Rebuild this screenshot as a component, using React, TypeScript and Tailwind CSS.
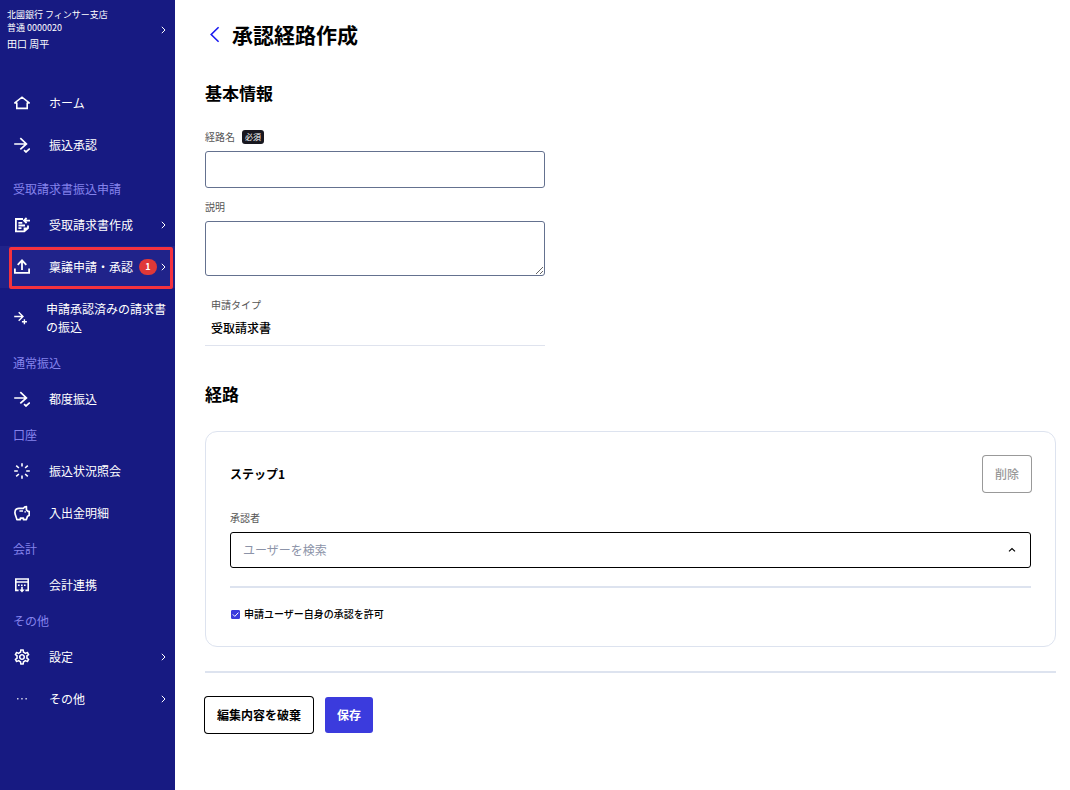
import { useState } from "react";
import type { ReactNode } from "react";
import { MdOutlineSettings } from "react-icons/md";

type NavItemProps = {
  icon: ReactNode;
  label: string;
  active?: boolean;
  badge?: number;
  arrow?: boolean;
  nested?: boolean;
};

type IconProps = {
  children: ReactNode;
  width?: number;
};

function Icon({ children, width = 1.5 }: IconProps) {
  return (
    <svg
      className="size-4"
      viewBox="0 0 16 16"
      fill="none"
      stroke="currentColor"
      strokeWidth={width}
      aria-hidden="true"
    >
      {children}
    </svg>
  );
}

const HomeIcon = () => (
  <Icon width={1.6}>
    <path d="M2.8 7.4V13.4H13.2V7.4M0.3 8.2L8 2.2L15.7 8.2M0.2 8H3M13 8H15.8" />
  </Icon>
);

const TransferCheckIcon = () => (
  <Icon width={1.7}>
    <path d="M0.2 7H12.4M6.3 1.2L12.4 7L6.3 12.4M10 13.2L12 15L15.8 11.6" />
  </Icon>
);

const TransferPlusIcon = () => (
  <Icon width={1.4}>
    <path d="M0.2 6.5H9M4.7 2.2L9 6.5L4.7 10.8M10.4 9.2V14.2M7.9 11.7H12.9" />
  </Icon>
);

const InvoiceIcon = () => (
  <Icon width={1.8}>
    <path d="M9 2H1.9V14.4H10.3L14 11V8.6M4.4 5.8H8.3M4.4 8.5H11M4.4 11.2H7.5" />
    <path d="M16 3.6H10.4M12.6 1L10 3.6L12.6 6.2" />
    <path d="M9.6 15V10.6H14.4Z" fill="currentColor" stroke="none" />
  </Icon>
);

const UploadIcon = () => (
  <Icon width={1.8}>
    <path d="M8 11V1.6M3.7 5.8L8 1.4L12.3 5.8M0.9 9.6V13.9H15.1V9.6" />
  </Icon>
);

const StatusIcon = () => (
  <Icon width={1.6}>
    <path d="M8 0.2V3.6M8 12.4V15.8M0.2 8H3.8M12.2 8H15.8M2.2 2.6L4.9 5M11.1 5L13.8 2.6M2.2 13.4L4.9 11M11.1 11L13.8 13.4" />
  </Icon>
);

const SavingsIcon = () => (
  <Icon width={1.7}>
    <path
      d="M9.4 3.3H5C2.5 3.3 0.9 5 0.9 7.4C0.9 9.8 2.2 11.5 2.9 14.6H6.4V13.1H9.4V14.6H12.4L13.5 11.2L15.2 10.4V6.4H14L12.4 4.8V1.6C11 1.6 10 2.2 9.4 3.3Z"
      strokeLinejoin="round"
    />
    <path d="M5.4 6H9M11.2 6.2V7.6" width="1.4" />
  </Icon>
);

const AccountingIcon = () => (
  <Icon width={1.6}>
    <path d="M4.6 13.4H1.8V2H14.2V13.4H11.4M1.8 5H14.2" />
    <path d="M4 8.3H12.2" strokeDasharray="1.6 1.4" />
    <path d="M8 9.8V13" />
    <path d="M5.3 12.4H10.7L8 15.4Z" fill="currentColor" stroke="none" />
  </Icon>
);

const MoreIcon = () => (
  <Icon width={1.4}>
    <path d="M3 7.8H4.5M7.2 7.8H8.7M11.4 7.8H12.9" opacity="0.8" />
  </Icon>
);

const ArrowRight = () => (
  <svg
    className="ml-auto h-2 w-2 shrink-0"
    viewBox="0 0 8 8"
    fill="none"
    stroke="currentColor"
    aria-hidden="true"
  >
    <path d="M2.8 0.8L6 4L2.8 7.2" />
  </svg>
);

function NavItem({ icon, label, active, badge, arrow, nested }: NavItemProps) {
  return (
    <li className={`relative ${active ? "bg-[#20238a]" : ""}`}>
      <a
        href="#"
        className={`flex items-center py-3 pl-3.5 pr-2 ${
          nested ? "gap-4" : "gap-[19px]"
        }`}
      >
        <span className="shrink-0">{icon}</span>
        <span className="flex flex-1 items-center">
          <span>{label}</span>
          {badge && (
            <span className="ml-1.5 flex h-4 w-[18px] shrink-0 items-center justify-center rounded-full bg-[#e03838] text-[9px] font-bold">
              {badge}
            </span>
          )}
          {arrow && <ArrowRight />}
        </span>
      </a>
      {/* Red frame around the current menu */}
      {active && (
        <span className="pointer-events-none absolute -bottom-px left-[9px] right-0.5 top-px rounded-xs border-3 border-[#f5323e]" />
      )}
    </li>
  );
}

function NavHeading({ children }: { children: ReactNode }) {
  return <li className="px-[13px] py-1.5 text-[#8583ec]">{children}</li>;
}

function Sidebar() {
  return (
    <aside className="w-[175px] shrink-0 bg-[#171a82] text-white">
      <button
        type="button"
        className="flex w-full items-center pl-[7px] pr-2 pt-2 text-left"
      >
        <span className="flex flex-col">
          <span className="text-[9px] leading-[13px]">
            北國銀行 フィンサー支店
          </span>
          <span className="text-[9px] leading-[13px]">普通 0000020</span>
          <span className="mt-0.5 text-[10px] leading-4">田口 周平</span>
        </span>
        <ArrowRight />
      </button>

      <nav className="pt-[30px] text-xs leading-[18px]">
        <ul>
          <NavItem icon={<HomeIcon />} label="ホーム" />
          <NavItem icon={<TransferCheckIcon />} label="振込承認" />
        </ul>
        <ul className="mt-2">
          <NavHeading>受取請求書振込申請</NavHeading>
          <NavItem icon={<InvoiceIcon />} label="受取請求書作成" arrow />
          <NavItem
            icon={<UploadIcon />}
            label="稟議申請・承認"
            badge={1}
            arrow
            active
          />
          <NavItem
            icon={<TransferPlusIcon />}
            label="申請承認済みの請求書の振込"
            nested
          />
          <NavHeading>通常振込</NavHeading>
          <NavItem icon={<TransferCheckIcon />} label="都度振込" />
          <NavHeading>口座</NavHeading>
          <NavItem icon={<StatusIcon />} label="振込状況照会" />
          <NavItem icon={<SavingsIcon />} label="入出金明細" />
          <NavHeading>会計</NavHeading>
          <NavItem icon={<AccountingIcon />} label="会計連携" />
          <NavHeading>その他</NavHeading>
          <NavItem
            icon={<MdOutlineSettings className="size-4 scale-115" />}
            label="設定"
            arrow
          />
          <NavItem icon={<MoreIcon />} label="その他" arrow />
        </ul>
      </nav>
    </aside>
  );
}

export default function App() {
  const [name, setName] = useState("");
  const [description, setDescription] = useState("");
  const [user, setUser] = useState("");
  const [allowSelf, setAllowSelf] = useState(true);

  return (
    <div className="flex min-h-screen bg-white font-['Noto_Sans_CJK_JP',sans-serif] text-xs text-black">
      <Sidebar />

      <main className="min-w-0 flex-1 pb-14 pl-[30px] pr-3.5 pt-[15px]">
        <div className="flex items-center gap-[7px]">
          <a href="#" aria-label="戻る" className="text-[#1a1aef]">
            <svg
              className="size-5"
              viewBox="0 0 20 20"
              fill="none"
              stroke="currentColor"
              strokeWidth="1.6"
            >
              <path d="M13.6 3.2L6.2 10.5L13.6 17.8" />
            </svg>
          </a>
          <h1 className="text-[21px] font-bold leading-[38px]">承認経路作成</h1>
        </div>

        <form onSubmit={(e) => e.preventDefault()}>
          {/* Basic info */}
          <section className="mt-7 max-w-[340px]">
            <h2 className="text-[17px] font-bold leading-6">基本情報</h2>

            <div className="mt-[25px] flex flex-col gap-3">
              <div>
                <div className="mb-[7px] flex items-center gap-[7px] leading-[14px]">
                  <label htmlFor="name" className="text-[10px] text-[#555]">
                    経路名
                  </label>
                  <span className="rounded-[3px] bg-[#181820] px-[3px] text-[8px] text-white">
                    必須
                  </span>
                </div>
                <input
                  id="name"
                  type="text"
                  value={name}
                  onChange={(e) => setName(e.target.value)}
                  className="block h-[37px] w-full rounded-[3px] border border-[#64718f] px-3"
                />
              </div>
              <div>
                <label
                  htmlFor="description"
                  className="mb-[7px] block text-[10px] leading-[14px] text-[#555]"
                >
                  説明
                </label>
                <textarea
                  id="description"
                  value={description}
                  onChange={(e) => setDescription(e.target.value)}
                  className="block h-[55px] w-full rounded-[3px] border border-[#64718f] px-3 py-2"
                />
              </div>
            </div>

            <dl className="mt-[22px] border-b border-[#dfe3ee] px-1.5 pb-2">
              <dt className="text-[10px] leading-[14px] text-[#555]">
                申請タイプ
              </dt>
              <dd className="mt-[7px] font-medium leading-[18px]">
                受取請求書
              </dd>
            </dl>
          </section>

          {/* Route steps */}
          <section className="mt-9">
            <h2 className="text-[17px] font-bold leading-6">経路</h2>

            <div className="mt-[25px] rounded-xl border border-[#dde3ef] p-6">
              <div className="flex items-center justify-between">
                <h3 className="font-bold">ステップ1</h3>
                <button
                  type="button"
                  disabled
                  className="h-9 rounded-[3px] px-3 font-medium text-[#999] ring-1 ring-[#999]"
                >
                  削除
                </button>
              </div>

              <label
                htmlFor="approver"
                className="mb-[7px] mt-[19px] block text-[10px] leading-[14px] text-[#555]"
              >
                承認者
              </label>
              <div className="flex h-9 items-center rounded-[3px] border border-black pl-3 pr-3.5">
                <input
                  id="approver"
                  type="text"
                  role="combobox"
                  aria-expanded="true"
                  placeholder="ユーザーを検索"
                  value={user}
                  onChange={(e) => setUser(e.target.value)}
                  className="min-w-0 flex-1 outline-none placeholder:text-[#8c93a8]"
                />
                <button type="button" aria-label="閉じる">
                  <svg
                    className="h-2 w-2"
                    viewBox="0 0 8 8"
                    fill="none"
                    stroke="currentColor"
                    strokeWidth="1.2"
                  >
                    <path d="M1 5.4L4 2.6L7 5.4" />
                  </svg>
                </button>
              </div>

              <hr className="mt-[18px] border-t-2 border-[#dde3ef]" />

              <label className="mt-[18px] flex items-center gap-1 pl-px text-[10px] font-medium leading-4">
                <span className="grid size-[9px]">
                  <input
                    type="checkbox"
                    checked={allowSelf}
                    onChange={(e) => setAllowSelf(e.target.checked)}
                    className="col-start-1 row-start-1 size-[9px] appearance-none rounded-[1px] border border-[#3b3bdd] checked:bg-[#3b3bdd]"
                  />
                  {allowSelf && (
                    <svg
                      className="pointer-events-none col-start-1 row-start-1 size-[9px]"
                      viewBox="0 0 9 9"
                      fill="none"
                      stroke="white"
                    >
                      <path d="M1.8 4.4L3.8 6.4L7.4 2.6" />
                    </svg>
                  )}
                </span>
                申請ユーザー自身の承認を許可
              </label>
            </div>
          </section>

          <hr className="mt-6 border-t-2 border-[#dde3ef]" />

          <div className="mt-6 flex gap-3">
            <button
              type="button"
              className="h-9 rounded-[3px] px-3 font-bold ring-1 ring-black"
            >
              編集内容を破棄
            </button>
            <button
              type="submit"
              className="h-9 rounded-[3px] bg-[#3b3bdd] px-3 font-bold text-white"
            >
              保存
            </button>
          </div>
        </form>
      </main>
    </div>
  );
}
